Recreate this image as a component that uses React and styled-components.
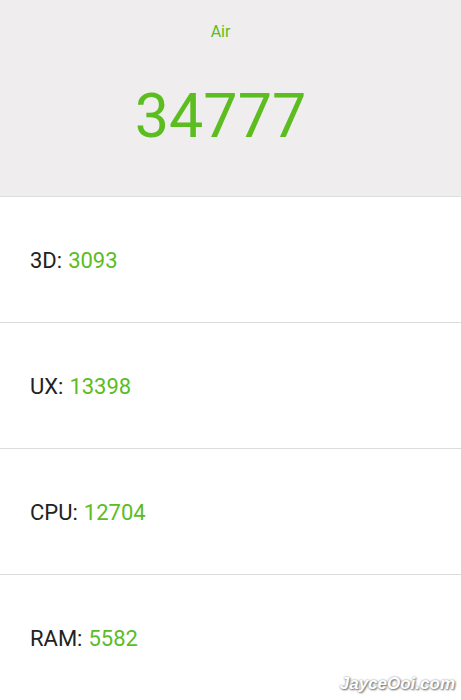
import styled, { createGlobalStyle } from "styled-components";

const GlobalStyle = createGlobalStyle`
  html, body {
    margin: 0;
    padding: 0;
    background: #ffffff;
    font-family: Roboto, "Noto Sans", sans-serif;
  }
`;

const Page = styled.div`
  position: relative;
  width: 461px;
  height: 700px;
  overflow: hidden;
  background: #ffffff;
`;

const Header = styled.header`
  height: 197px;
  box-sizing: border-box;
  background: #efeded;
  border-bottom: 1px solid #dedede;
  display: flex;
  flex-direction: column;
  align-items: center;
  padding: 23px 20px 0 0;
`;

const Device = styled.div`
  font-size: 16px;
  color: #5bbd1f;
  line-height: 18px;
`;

const Total = styled.div`
  margin-top: 40px;
  font-size: 61px;
  line-height: 70px;
  color: #5bbd1f;
`;

const Row = styled.div`
  height: 126px;
  box-sizing: border-box;
  border-bottom: 1px solid #dcdcdc;
  display: flex;
  align-items: center;
  padding: 2px 0 0 30px;
  font-size: 22px;
  color: #222222;
  &:last-child {
    border-bottom: none;
  }
`;

const Score = styled.span`
  color: #5bbd1f;
  margin-left: 6px;
`;

const Watermark = styled.div`
  position: absolute;
  right: 6px;
  bottom: 6px;
  font-family: "Liberation Sans", Arial, sans-serif;
  font-style: italic;
  font-weight: 700;
  font-size: 17px;
  color: #ffffff;
  text-shadow: 0 0 2px #888, 1px 1px 2px #666;
`;

const scores = [
  { label: "3D:", value: 3093 },
  { label: "UX:", value: 13398 },
  { label: "CPU:", value: 12704 },
  { label: "RAM:", value: 5582 },
];

export default function App() {
  return (
    <Page>
      <GlobalStyle />
      <Header>
        <Device>Air</Device>
        <Total>34777</Total>
      </Header>
      {scores.map((s) => (
        <Row key={s.label}>
          {s.label}
          <Score>{s.value}</Score>
        </Row>
      ))}
      <Watermark>JayceOoi.com</Watermark>
    </Page>
  );
}
